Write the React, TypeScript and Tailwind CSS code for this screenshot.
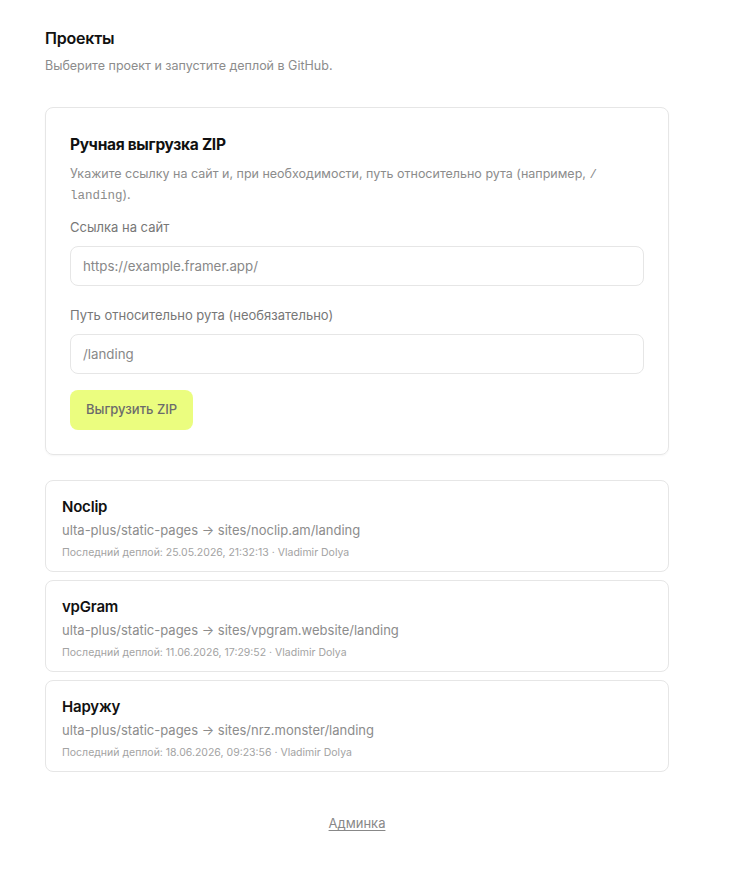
import React, { useState } from 'react';

type Project = {
    name: string;
    repo: string;
    path: string;
    deployedAt: string;
    author: string;
};

const projects: Project[] = [
    { name: 'Noclip', repo: 'ulta-plus/static-pages', path: 'sites/noclip.am/landing', deployedAt: '25.05.2026, 21:32:13', author: 'Vladimir Dolya' },
    { name: 'vpGram', repo: 'ulta-plus/static-pages', path: 'sites/vpgram.website/landing', deployedAt: '11.06.2026, 17:29:52', author: 'Vladimir Dolya' },
    { name: 'Наружу', repo: 'ulta-plus/static-pages', path: 'sites/nrz.monster/landing', deployedAt: '18.06.2026, 09:23:56', author: 'Vladimir Dolya' },
];

const font = { fontFamily: 'Inter, "Noto Sans", sans-serif' };

const App = () => {
    const [url, setUrl] = useState('');
    const [path, setPath] = useState('');

    return (
        <div className="min-h-screen bg-white text-[#111]" style={font}>
            <div className="w-[624px] ml-[45px] pt-[28px] pb-10">

                {/* Header */}
                <h1 className="text-[16px] font-semibold leading-[20px] tracking-[-0.2px]">Проекты</h1>
                <p className="mt-[9px] text-[12.5px] leading-[18px] text-[#8c8c8c]">
                    Выберите проект и запустите деплой в GitHub.
                </p>

                {/* Manual ZIP upload */}
                <div className="mt-[32px] rounded-[8px] border border-[#e6e6e6] shadow-[0_1px_2px_rgba(0,0,0,0.04)] px-[24px] pt-[27px] pb-[24px]">
                    <h2 className="text-[15.5px] font-bold leading-[20px] tracking-[-0.3px]">Ручная выгрузка ZIP</h2>
                    <p className="mt-[8px] text-[12.5px] leading-[21px] text-[#8c8c8c]">
                        Укажите ссылку на сайт и, при необходимости, путь относительно рута (например, <code className="font-['Liberation_Mono',monospace] text-[12.5px] leading-none">/</code> <code className="font-['Liberation_Mono',monospace] text-[12.5px] leading-none">landing</code>).
                    </p>

                    <label className="block mt-[12px] text-[13px] leading-[20px] text-[#777]">Ссылка на сайт</label>
                    <input
                        value={url}
                        onChange={(e) => setUrl(e.target.value)}
                        placeholder="https://example.framer.app/"
                        className="mt-[9px] w-full h-[40px] rounded-[8px] border border-[#e6e6e6] px-[12px] text-[13.3px] text-[#333] placeholder:text-[#888] outline-none"
                    />

                    <label className="block mt-[19px] text-[13px] leading-[20px] text-[#777]">Путь относительно рута (необязательно)</label>
                    <input
                        value={path}
                        onChange={(e) => setPath(e.target.value)}
                        placeholder="/landing"
                        className="mt-[9px] w-full h-[40px] rounded-[8px] border border-[#e6e6e6] px-[12px] text-[13.3px] text-[#333] placeholder:text-[#888] outline-none"
                    />

                    <button className="mt-[16px] h-[40px] px-[16px] rounded-[8px] bg-[#ebfd7f] text-[13px] font-medium text-[#6b6b6b]">
                        Выгрузить ZIP
                    </button>
                </div>

                {/* Project list */}
                <div className="mt-[25px] flex flex-col gap-[8px]">
                    {projects.map((p) => (
                        <div key={p.name} className="h-[92px] rounded-[8px] border border-[#e6e6e6] px-[16px] pt-[16px] cursor-pointer">
                            <div className="text-[15px] font-semibold leading-[20px] tracking-[-0.2px]">{p.name}</div>
                            <div className="mt-[3px] text-[13px] leading-[20px] text-[#8c8c8c]">
                                {p.repo} → {p.path}
                            </div>
                            <div className="mt-[5px] text-[10.5px] leading-[16px] text-[#a3a3a3]">
                                Последний деплой: {p.deployedAt} · {p.author}
                            </div>
                        </div>
                    ))}
                </div>

                {/* Footer */}
                <div className="mt-[38px] text-center">
                    <a href="#" className="text-[13px] text-[#888] underline underline-offset-2">Админка</a>
                </div>
            </div>
        </div>
    );
};

export default App;
